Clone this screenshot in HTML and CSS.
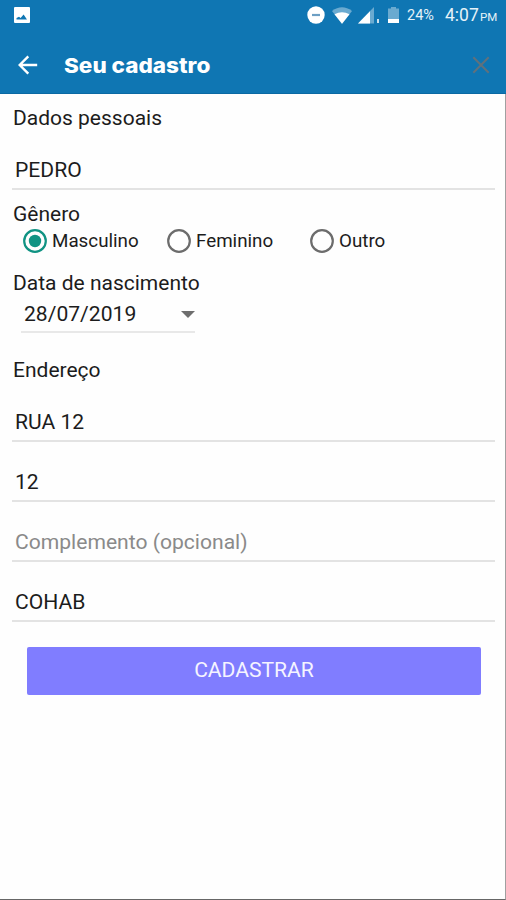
FILE: index.html
```html
<!DOCTYPE html>
<html lang="pt-BR">
<head>
<meta charset="utf-8">
<title>Seu cadastro</title>
<link rel="stylesheet" href="styles.css">
</head>
<body>
<div class="screen">
  <header class="header">
    <div class="status">
      <svg class="picture" width="16" height="16" viewBox="0 0 16 16"><rect width="16" height="16" rx="1" fill="#fff"/><path d="M2.500 12.500V11L5 9.800 6.600 11 9.600 7.500 13 12.500z" fill="#0f76b3"/></svg>
      <div class="indicators">
        <svg class="dnd" width="18" height="18" viewBox="0 0 18 18"><circle cx="9" cy="9" r="8.700" fill="#fff"/><path d="M5 9h8" stroke="#6d9fc4" stroke-width="2.200"/></svg>
        <svg class="wifi" width="20" height="17" viewBox="0 0 20 17"><path d="M0 4Q10-3.500 20 4L10 17z" fill="#fff" opacity=".38"/><path d="M2.500 7.200Q10 3.500 17.500 7.200L10 16.700z" fill="#fff"/></svg>
        <svg class="signal" width="23" height="17" viewBox="0 0 23 17"><path d="M0 16.500 16 0V16.500z" fill="#fff" opacity=".38"/><path d="M0 16.500 12 4.200V16.500z" fill="#fff"/><path d="M19 12h2v4h-2z" fill="#fff" opacity=".8"/></svg>
        <svg class="battery" width="11" height="16" viewBox="0 0 11 16"><path d="M0 1.500h3V0h5v1.500h3V16H0z" fill="#fff" opacity=".38"/><path d="M0 12h11v4H0z" fill="#fff"/></svg>
        <span class="percent">24%</span>
        <span class="clock">4:07</span>
        <span class="meridiem">PM</span>
      </div>
    </div>
    <div class="toolbar">
      <svg class="back" width="20" height="20" viewBox="0 0 20 20" fill="none" stroke="#fff" stroke-width="2.400"><path d="M19.200 10H2M10.300 1.300 1.700 10l8.600 8.700"/></svg>
      <h1 class="title">Seu cadastro</h1>
      <svg class="close" width="18" height="18" viewBox="0 0 18 18" fill="none" stroke="#60717c" stroke-width="2"><path d="M1.300 1.300l15.400 15.400M16.700 1.300 1.300 16.700"/></svg>
    </div>
  </header>
  <main class="form">
    <h2 class="label personal">Dados pessoais</h2>
    <div class="field name"><span>PEDRO</span></div>
    <div class="label gender">Gênero</div>
    <div class="radios">
      <div class="radio"><svg width="24" height="24" viewBox="0 0 24 24"><circle cx="12" cy="12" r="10.800" fill="none" stroke="#109383" stroke-width="2.200"/><circle cx="12" cy="12" r="6.200" fill="#109383"/></svg><span>Masculino</span></div>
      <div class="radio"><svg width="24" height="24" viewBox="0 0 24 24"><circle cx="12" cy="12" r="10.800" fill="none" stroke="#6c6c6c" stroke-width="2.200"/></svg><span>Feminino</span></div>
      <div class="radio"><svg width="24" height="24" viewBox="0 0 24 24"><circle cx="12" cy="12" r="10.800" fill="none" stroke="#6c6c6c" stroke-width="2.200"/></svg><span>Outro</span></div>
    </div>
    <div class="label birth">Data de nascimento</div>
    <div class="date"><span>28/07/2019</span><svg width="14" height="7" viewBox="0 0 14 7"><path d="M0 0h14L7 7z" fill="#6e6e6e"/></svg></div>
    <h2 class="label address">Endereço</h2>
    <div class="field street"><span>RUA 12</span></div>
    <div class="field"><span>12</span></div>
    <div class="field placeholder"><span>Complemento (opcional)</span></div>
    <div class="field"><span>COHAB</span></div>
    <button class="submit" type="button">CADASTRAR</button>
  </main>
</div>
</body>
</html>
```
FILE: styles.css
```css
* { box-sizing: border-box; }
body { margin: 0; font-family: Roboto, "Liberation Sans", sans-serif; color: #1c1c1c; background: #fefefe; }
svg { display: block; flex: none; }
.screen { height: 900px; display: flex; flex-direction: column; border-right: 1px solid #a0a0a0; border-bottom: 1px solid #666; }
.header { height: 94px; flex: none; background: #0f76b3; color: #fff; margin-right: -1px; border-bottom: 1px solid #0a69a3; }
.status { height: 30px; display: flex; align-items: center; justify-content: space-between; padding: 0 9px 0 14px; }
.indicators { display: flex; align-items: center; color: #e5f2f8; }
.dnd { margin-right: 7px; }
.signal { margin: 0 7px 0 6px; }
.percent { font-size: 14.500px; margin-left: 8px; width: 38px; }
.clock { font-size: 17.500px; width: 35px; }
.meridiem { font-size: 11.500px; margin-top: 3px; width: 17px; }
.toolbar { height: 70px; display: flex; align-items: center; padding: 0 16px 0 18px; }
.title { margin: 1px auto 0 26px; font: 800 20.500px/28px Inter, sans-serif; transform: scaleX(1.098); transform-origin: left center; }
.form { padding: 11px 10px 0 12px; display: flex; flex-direction: column; }
.label { margin: 0 0 0 1px; font-size: 21px; font-weight: 400; line-height: 26px; }
.field { height: 60px; display: flex; align-items: flex-end; padding: 0 3px 5px; border-bottom: 2px solid #e3e3e3; font-size: 21.100px; line-height: 26px; }
.name { height: 59px; }
.street { height: 59px; }
.placeholder { color: #8a8a8a; }
.gender { margin-top: 11px; }
.radios { display: grid; grid-template-columns: 144px 143px 1fr; margin-left: 11px; height: 28px; }
.radio { display: flex; align-items: center; gap: 5px; font-size: 18.800px; line-height: 24px; }
.birth { margin-top: 15px; }
.date { width: 174px; height: 37px; margin-left: 9px; padding: 1px 0 0 3px; display: flex; align-items: center; justify-content: space-between; border-bottom: 2px solid #e8e8e8; font-size: 21.100px; line-height: 26px; }
.address { margin-top: 24px; }
.submit { height: 48px; margin: 25px 14px 0 15px; border: 0; border-radius: 2px; background: #807dff; color: #f5f4ff; font: 21.100px/26px Roboto, sans-serif; padding: 0 0 2px; }
```
